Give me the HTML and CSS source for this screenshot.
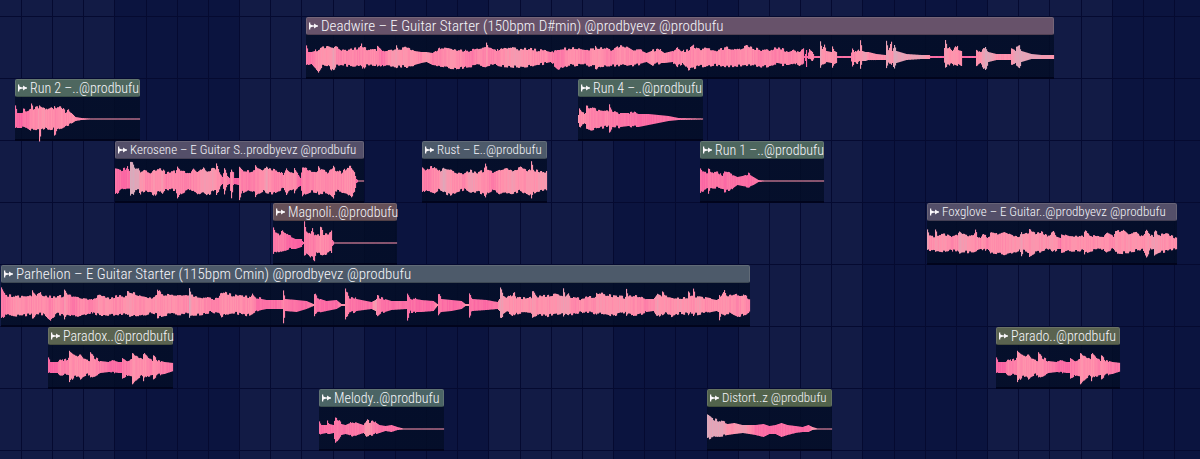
FILE: index.html
```html
<!DOCTYPE html>
<html lang="en">
<head>
    <meta charset="UTF-8">
    <meta name="viewport" content="width=device-width, initial-scale=1">
    <title>Playlist</title>
    <link rel="stylesheet" href="styles.css">
</head>
<body>
    <svg width="0" height="0" class="defs" aria-hidden="true">
        <symbol id="clip-icon" viewBox="0 0 10 8">
            <path d="M0 0H1.4V2L4.8 4L1.4 6V8H0Z"/>
            <path d="M1 3.3H10V4.7H1Z"/>
            <path d="M5.6 1.2L9.8 4L5.6 6.8Z"/>
        </symbol>
    </svg>

    <main class="playlist">
        <div class="grid" id="grid"></div>

        <div class="track track-top"></div>
        <div class="track">
            <div class="clip plum wide" data-wave="deadwire" data-start="306" data-length="748">Deadwire – E Guitar Starter (150bpm D#min) @prodbyevz @prodbufu</div>
        </div>
        <div class="track">
            <div class="clip green" data-wave="run2" data-start="15" data-length="125">Run 2 –..@prodbufu</div>
            <div class="clip green" data-wave="run4" data-start="578" data-length="125">Run 4 –..@prodbufu</div>
        </div>
        <div class="track">
            <div class="clip violet tight" data-wave="kerosene" data-start="115" data-length="249">Kerosene – E Guitar S..prodbyevz @prodbufu</div>
            <div class="clip slate tight" data-wave="rust" data-start="422" data-length="125">Rust – E..@prodbufu</div>
            <div class="clip green" data-wave="run1" data-start="700" data-length="124">Run 1 –..@prodbufu</div>
        </div>
        <div class="track">
            <div class="clip brown" data-wave="magnolia" data-start="273" data-length="124">Magnoli..@prodbufu</div>
            <div class="clip violet tight" data-wave="foxglove" data-start="927" data-length="250">Foxglove – E Guitar..@prodbyevz @prodbufu</div>
        </div>
        <div class="track">
            <div class="clip slate wide" data-wave="parhelion" data-start="1" data-length="749">Parhelion – E Guitar Starter (115bpm Cmin) @prodbyevz @prodbufu</div>
        </div>
        <div class="track">
            <div class="clip olive" data-wave="paradox" data-start="48" data-length="125">Paradox..@prodbufu</div>
            <div class="clip olive" data-wave="paradox" data-start="996" data-length="124">Parado..@prodbufu</div>
        </div>
        <div class="track">
            <div class="clip teal" data-wave="melody" data-start="319" data-length="125">Melody..@prodbufu</div>
            <div class="clip moss tight" data-wave="distort" data-start="707" data-length="125">Distort..z @prodbufu</div>
        </div>
        <div class="track track-rest"></div>
    </main>

    <script src="script.js"></script>
</body>
</html>
```
FILE: styles.css
```css
body {
    margin: 0;
    background: #0b143f;
    font-family: "Roboto Condensed", "Open Sans Condensed", "DejaVu Sans Condensed", sans-serif;
    font-weight: 300;
}
.defs {
    position: absolute;
}
.playlist {
    position: relative;
    display: flex;
    flex-direction: column;
    min-height: 100vh;
    overflow: hidden;
}

/* bars and beats behind the tracks */
.grid {
    position: absolute;
    top: 0;
    bottom: 0;
    left: -0.78%;
    width: 103.9%;
    display: flex;
}
.bar {
    flex: 1;
    display: flex;
    background: #0b143f;
}
.bar:nth-child(odd) {
    background: #121b45;
}
.beat {
    flex: 1;
    border-right: 1px solid #050a30;
}

.track {
    position: relative;
    box-sizing: border-box;
    height: 62px;
    border-bottom: 1px solid #050a30;
}
.track-top {
    height: 17px;
}
.track-rest {
    height: auto;
    flex: 1;
    border-bottom: 0;
}

.clip {
    position: absolute;
    top: 0;
    bottom: -1px;
    display: flex;
    flex-direction: column;
    background: linear-gradient(transparent 10px, rgba(3, 13, 38, 0.84) 10px);
    border-bottom: 2px solid #01041c;
    box-sizing: border-box;
}
.clip-title {
    box-sizing: border-box;
    height: 18px;
    display: flex;
    align-items: center;
    gap: 3px;
    padding: 0 0 0 2px;
    border-radius: 2px;
    border: 1px solid rgba(160, 160, 160, 0.25);
    border-bottom-color: rgba(0, 0, 0, 0.2);
    background: var(--color);
    color: #f6f6fa;
    font-size: 14px;
    line-height: 16px;
    white-space: nowrap;
}
.clip-title svg {
    flex: none;
    width: 9px;
    height: 8px;
    fill: #fbf8fb;
}
.wide .clip-title {
    font-size: 15px;
}
.tight .clip-title {
    font-size: 13px;
}
.clip-wave {
    display: block;
    width: 100%;
    height: 42px;
    overflow: visible;
}

.plum { --color: #67526a; }
.green { --color: #4e675f; }
.violet { --color: #544f69; }
.slate { --color: #4d5a6a; }
.brown { --color: #665058; }
.olive { --color: #5a6350; }
.teal { --color: #4b6465; }
.moss { --color: #52634c; }
```
FILE: script.js
```js
// Width of the visible range that clip starts and lengths are given in
const VIEW = 1200;
const MIDDLE = 22;

// Envelope points: position, level above, level below, brightness (0 to 2)
const waves = {
    deadwire: `0 11 9 .4, 2 5 8 .4, 5 5 7 .5, 12 7 15 .9, 16 9 9 1, 22 10 9 1, 27 8 14 1.4, 30 10 8 .8, 35 7 8 .7,
        48 8 9 .8, 53 9 8 .6, 55 14 10 .8, 56 9 13 .7, 60 8 8 .9, 70 7 8 .8, 71 12 10 .8, 76 6 8 .3, 82 7 8 .9, 89 8 9 1.2,
        90 13 10 1.2, 92 8 9 1, 100 9 10 1, 108 6 8 .9, 115 5 6 .8, 120 5 5 1.2, 126 4 8 .6, 135 10 9 .8, 142 9 11 1,
        150 7 12 .9, 158 6 10 .7, 165 7 9 .5, 172 8 8 .8, 179 9 9 .6, 180 14 10 1, 182 9 9 .7, 190 6 8 .7, 198 10 9 1,
        210 8 10 1.2, 220 8 10 1, 230 7 8 .8, 240 6 6 .8, 244 5 5 .6, 252 8 12 .4, 262 8 8 .9, 270 9 8 .9, 280 8 8 .6,
        288 8 9 1, 289 12 13 1, 292 8 10 1, 298 9 8 .8, 305 7 9 .6, 313 11 8 .9, 321 10 9 .8, 327 7 8 .8, 333 7 7 .7,
        340 4 5 .7, 345 6 8 .9, 352 8 6 .7, 358 4 6 .9, 366 6 5 .6, 371 9 9 .8, 376 6 6 .8, 382 7 13 .8, 387 11 11 .8,
        393 8 9 .9, 400 8 9 .8, 410 7 8 .8, 420 9 9 .8, 430 7 9 .7, 440 11 9 .9, 446 9 8 .8, 455 7 10 .6, 463 6 9 .8,
        468 9 7 .6, 475 8 8 .7, 482 5 8 .7, 488 7 6 .7, 493 5 9 .8, 497 8 6 .5, 498 1 1 0, 499 3 4 .2, 500 7 9 .3, 501 1 1 0, 503 8 3 .7,
        506 5 4 .8, 508 1 1 .3, 513 1 1 .3, 514 17 11 1.5, 516 8 6 1, 518 12 6 1, 520 6 5 1, 525 5 6 .9, 526 11 11 1,
        528 6 7 1, 530 5 6 .9, 531 1 1 .3, 544 1 1 .3, 546 8 8 .8, 548 5 5 .8, 551 8 6 1, 553 6 4 .9, 554 16 12 1.2,
        556 6 4 1.2, 559 5 4 1.5, 562 5 3 .9, 570 3 3 1, 579 2 3 .9, 580 16 10 1.4, 582 7 5 1.2, 585 14 8 1.2, 586 6 6 1,
        588 11 12 1.7, 590 6 6 1.7, 600 3 3 1.4, 615 2 2 1.5, 623 2 2 1, 624 1 1 .2, 637 1 1 .2, 639 17 11 1.5, 641 8 6 1,
        643 10 8 1, 646 6 7 1, 651 12 9 .9, 652 7 7 .9, 655 6 9 .9, 656 1 1 .2, 669 1 1 .2, 670 8 8 .9, 674 5 6 1,
        679 11 14 1.7, 682 5 5 1.7, 690 3 3 1, 704 3 3 .9, 705 8 9 1, 709 6 6 1.5, 710 11 10 1.6, 713 12 12 1.6,
        715 6 5 1.7, 725 3 2 1.6, 735 2 2 1.4, 748 2 2 1`,
    run2: `0 13 10 .2, 2 6 9 .2, 6 6 9 .1, 8 9 8 .5, 12 8 9 .3, 15 9 11 .7, 16 14 11 .8, 18 10 11 .8, 22 12 11 .8, 23 10 11 1.2,
        24 13 21 1, 26 11 11 1, 30 9 9 1, 35 12 11 .9, 38 10 10 .8, 39 13 18 .7, 41 12 11 .8, 46 12 9 .9, 50 7 7 .8,
        53 9 6 .8, 57 5 4 .9, 60 2 2 .9, 66 1 1 .7, 75 .5 .5 1, 125 .5 .5 1`,
    run4: `0 4 4 1, 1 10 9 .8, 3 7 6 .9, 7 6 5 .9, 8 12 10 .8, 13 11 11 .6, 20 8 9 .6, 30 7 7 .7, 31 14 14 .7, 34 8 8 .5,
        42 6 8 .4, 50 6 7 .4, 55 7 8 .3, 60 5 8 .3, 70 5 6 .2, 80 4 4 .3, 90 3 2 .3, 100 1 1 .4, 125 .5 .5 .9`,
    kerosene: `0 12 14 .3, 5 11 9 .3, 10 12 8 .1, 12 15 7 .3, 14 9 7 .3, 15 18 14 1.8, 18 17 14 1.8, 20 11 9 1.7, 23 12 9 1.7,
        25 8 12 1.2, 30 10 10 .8, 36 8 11 .8, 38 11 16 1, 42 12 11 .9, 45 12 10 .9, 47 11 12 1.2, 50 8 8 .6, 55 9 9 .7,
        60 9 9 .8, 62 15 17 .9, 65 10 13 .7, 70 9 10 .6, 75 8 8 .7, 78 13 9 .8, 82 9 13 .8, 88 14 10 1.2, 92 10 14 1.1,
        97 12 11 1.2, 100 11 8 1, 101 17 13 1, 103 11 11 1, 105 7 5 .6, 107 4 3 .3, 109 14 14 .8, 112 5 4 .6, 114 3 3 .4,
        116 12 17 .8, 118 8 5 .4, 119 3 3 .1, 123 3 4 0, 124 14 19 .8, 127 11 11 .6, 134 10 9 .6, 139 11 11 .7, 140 16 17 .8,
        142 13 13 .8, 148 11 10 .8, 151 15 12 1.5, 153 12 12 1, 158 11 12 .7, 164 10 9 .7, 168 6 7 .7, 171 12 15 .8,
        174 9 9 .7, 178 7 7 .8, 179 12 11 .8, 183 6 6 .4, 185 3 5 .1, 187 13 16 .7, 190 12 13 .6, 196 10 10 .7,
        202 10 11 .8, 203 15 14 1, 205 11 12 .8, 212 9 12 .7, 218 14 17 .9, 220 11 10 .8, 226 8 11 .8, 232 14 13 .9,
        235 14 16 .9, 239 8 12 .8, 241 2 2 .1, 243 .5 .5 1, 249 .5 .5 1`,
    rust: `0 13 12 .6, 3 10 9 .6, 6 13 11 .6, 12 14 12 .8, 16 9 9 .8, 21 12 11 1.7, 28 10 14 1, 35 8 11 .9, 42 8 8 .7, 48 10 11 1.4,
        55 8 11 1, 61 10 13 .9, 63 18 16 1, 65 11 12 .8, 70 9 9 .5, 77 11 12 .9, 84 13 11 1, 90 11 12 1.2, 98 13 10 .9,
        105 10 13 1, 108 12 14 1, 109 21 18 1, 111 11 12 1, 118 9 10 1.2, 125 10 9 1.1`,
    run1: `0 12 13 .2, 2 9 10 .2, 7 9 8 .3, 8 11 13 .6, 10 10 7 .4, 13 8 7 .4, 18 8 7 .4, 22 5 8 .4, 24 9 10 .3, 30 7 9 .4,
        37 4 4 .3, 42 5 5 .3, 48 7 6 .2, 53 4 4 .3, 58 1 1 .5, 64 .5 .5 1, 124 .5 .5 1`,
    magnolia: `0 15 12 .3, 2 10 8 .5, 6 9 10 .6, 10 12 8 .5, 15 7 6 .1, 22 4 6 .1, 28 4 4 0, 29 2 2 0, 30 1 1 .5, 31 21 13 .6,
        33 12 10 .6, 37 9 14 .6, 39 15 15 .5, 41 9 17 .6, 43 8 10 .8, 46 8 9 .8, 47 17 11 1, 50 9 12 .8, 55 9 10 .7,
        58 11 9 .6, 59 3 3 .3, 61 .5 .5 1, 124 .5 .5 1`,
    foxglove: `0 13 8 1.4, 2 7 7 .9, 7 7 8 1, 8 12 9 1.3, 10 8 8 1, 18 8 9 1, 24 6 7 .8, 30 7 8 .8, 32 12 10 1.5, 36 9 9 1.2, 45 7 9 1,
        48 12 8 .9, 50 7 7 1, 53 5 6 .7, 55 9 8 1, 60 5 6 .6, 62 7 8 1, 63 11 10 1, 68 9 10 .9, 78 11 11 .9, 85 8 9 1,
        92 7 7 1, 94 12 12 1.4, 96 8 8 1, 101 9 9 1, 102 13 14 1, 108 10 9 1, 113 11 9 1, 120 7 6 1, 126 12 9 1.1,
        130 6 6 .9, 133 5 6 .5, 134 10 9 .9, 142 7 8 .9, 152 7 8 1, 156 6 7 .9, 157 12 10 1, 165 7 7 .9, 176 6 6 .9,
        180 10 9 .9, 186 6 6 .8, 188 11 10 1, 195 12 10 1, 196 14 9 1, 202 9 9 1, 210 10 7 1, 215 7 6 .9, 219 12 14 1,
        220 13 13 1.2, 223 7 7 1, 226 6 6 1.4, 227 12 12 1.3, 233 8 9 1, 240 9 8 .9, 250 5 6 .9`,
    parhelion: `0 17 14 .5, 2 13 12 .5, 4 10 10 .6, 15 8 11 1, 30 8 9 .8, 31 14 14 1, 35 10 9 .9, 39 13 9 .8, 42 9 9 1, 49 8 15 .6,
        55 8 9 1, 62 9 10 .8, 63 16 14 1.3, 66 10 9 .8, 72 9 11 .4, 80 7 10 .9, 90 6 7 .5, 97 9 10 1, 108 7 10 .9, 118 9 10 .8,
        125 9 9 1, 126 14 11 1.2, 133 12 10 1, 140 9 11 .9, 150 7 8 .9, 155 9 9 1, 156 16 12 .9, 160 11 11 .9, 167 10 9 1,
        178 9 9 .8, 187 9 9 .9, 188 16 14 1.7, 190 9 10 1.1, 200 8 9 .9, 210 6 7 .6, 218 8 8 .7, 220 13 12 .9, 226 11 9 .9,
        235 9 8 .9, 245 9 11 .8, 249 8 9 .9, 251 12 8 .9, 255 7 6 .4, 265 5 4 .3, 275 5 4 .3, 281 5 4 .6, 282 16 17 .9,
        284 6 6 .5, 295 5 7 .3, 305 4 4 .2, 312 1 1 1, 313 12 10 .6, 316 7 8 .3, 325 4 6 .2, 335 5 4 .2, 340 1 1 1, 343 1 1 1,
        344 18 15 .7, 347 8 8 .4, 355 6 6 .3, 370 3 4 .3, 374 5 6 1.5, 376 9 11 .6, 380 7 8 .4, 390 4 5 .3, 405 4 4 .3,
        406 12 15 .5, 409 7 7 .3, 420 5 7 .2, 432 4 6 .2, 436 1 1 1, 437 12 11 .5, 440 6 7 .3, 450 5 6 .2, 460 4 4 .2,
        464 1 1 1, 467 1 1 1, 468 11 12 .5, 471 6 6 .3, 485 5 5 .2, 496 3 4 .4, 498 6 6 1.5, 499 19 13 1.4, 502 9 10 1.2,
        506 7 7 1, 513 12 11 1, 515 8 8 .9, 524 7 8 1, 530 8 8 1, 531 15 12 1.2, 535 9 10 .9, 544 9 11 .9, 553 11 9 1,
        561 8 8 1.3, 562 17 12 1.4, 564 9 9 1.2, 567 12 10 1.2, 569 8 9 1, 572 8 9 .7, 580 6 7 .9, 588 8 7 .8, 594 8 8 .9,
        595 12 9 1, 603 11 8 1, 612 9 11 1, 620 8 8 1.1, 624 7 7 1, 625 15 11 1, 627 9 9 1, 630 9 10 .8, 638 8 9 .9,
        645 6 7 .6, 652 6 6 .8, 656 11 12 1.3, 660 9 9 1, 661 14 10 1, 663 9 8 1, 670 8 11 .9, 678 7 8 1.1, 686 8 9 1,
        687 15 11 1, 689 8 8 .9, 691 8 8 .9, 692 15 12 .9, 694 9 9 1, 696 9 9 1.2, 705 7 8 .8, 715 5 6 .9, 717 6 7 1,
        718 11 15 1, 720 8 8 1, 723 14 10 1, 725 9 8 1, 728 9 8 .9, 736 10 12 .8, 742 10 10 .9, 749 5 6 .6`,
    paradox: `0 9 7 .1, 2 5 6 .1, 9 5 6 .2, 11 8 8 .7, 15 6 8 .5, 20 8 8 .6, 21 15 15 1, 25 12 10 .9, 29 9 9 .9, 32 13 12 1,
        36 8 9 .8, 41 7 7 .8, 42 15 11 .9, 46 9 9 .8, 52 6 6 .6, 60 5 5 .4, 63 7 5 .3, 70 5 6 .2, 73 5 6 .2, 74 9 11 .5,
        78 6 8 .5, 83 8 9 .7, 84 14 16 1, 89 11 11 .8, 94 9 8 .8, 95 14 13 1, 99 9 9 .7, 104 6 8 .7, 105 12 12 .8,
        109 7 8 .7, 116 5 7 .5, 125 4 4 .4`,
    melody: `0 7 6 .2, 2 4 5 .2, 7 4 4 .4, 8 7 5 .4, 10 5 5 .3, 14 4 4 .3, 16 10 15 .4, 19 9 11 .4, 22 5 6 .4, 26 4 5 .4, 33 7 7 .5,
        38 6 6 .4, 44 4 4 .5, 47 9 7 1.2, 50 7 6 1, 54 8 6 .5, 60 4 4 .4, 66 3 2 .4, 72 4 3 .3, 78 2 1 .3, 84 .5 .5 1, 125 .5 .5 1`,
    distort: `0 14 10 1.7, 3 12 9 1.7, 8 9 8 1.7, 15 7 7 1.5, 20 5 6 1, 27 6 5 1, 35 4 4 1.4, 42 4 5 .9, 48 4 6 .4, 56 5 8 .2,
        62 3 5 .3, 68 4 5 .2, 74 6 8 .3, 80 4 6 .3, 88 3 4 .2, 95 2 3 .1, 101 4 3 .2, 105 2 1 1, 110 .5 .5 1, 125 .5 .5 1`
};

// deterministic noise in -0.5..0.5
function noise(n) {
    const v = Math.sin(n * 127.1 + 11.7) * 43758.5453;
    return v - Math.floor(v) - 0.5;
}

function mix(a, b, t) {
    return a.map((v, i) => Math.round(v + (b[i] - v) * t));
}

function shade(t) {
    const hot = [250, 96, 162];
    const pink = [255, 147, 172];
    const pale = [211, 174, 190];
    const tone = Math.max(0, Math.min(2, t));
    return tone < 1 ? mix(hot, pink, tone) : mix(pink, pale, tone - 1);
}

function drawWave(name, length) {
    const points = waves[name].split(',').map(p => p.trim().split(/\s+/).map(Number));
    let bars = '';
    let k = 0;
    for (let x = 0; x < length; x++) {
        while (k < points.length - 2 && points[k + 1][0] <= x) k++;
        const a = points[k];
        const b = points[k + 1];
        const t = Math.min(1, (x - a[0]) / (b[0] - a[0]));
        let [up, down, tone] = [1, 2, 3].map(i => a[i] + (b[i] - a[i]) * t);
        if (up > 6) {
            up += noise(Math.floor(x / 2)) * 3;
            down += noise(Math.floor(x / 2) + 900) * 3;
        }
        tone += noise(x + 400) * 0.3;
        bars += `<rect x="${x}" y="${(MIDDLE - up).toFixed(1)}" width="1.1" height="${(up + down).toFixed(1)}" fill="rgb(${shade(tone)})"/>`;
    }
    return `<svg class="clip-wave" viewBox="0 0 ${length} 42" preserveAspectRatio="none" aria-hidden="true">${bars}</svg>`;
}

document.getElementById('grid').innerHTML =
    ('<div class="bar">' + '<div class="beat"></div>'.repeat(4) + '</div>').repeat(10);

document.querySelectorAll('.clip').forEach(clip => {
    const length = Number(clip.dataset.length);
    const title = clip.textContent;
    clip.style.left = clip.dataset.start / VIEW * 100 + '%';
    clip.style.width = length / VIEW * 100 + '%';
    clip.innerHTML = `<div class="clip-title"><svg aria-hidden="true"><use href="#clip-icon"/></svg><span>${title}</span></div>`
        + drawWave(clip.dataset.wave, length);
});
```
